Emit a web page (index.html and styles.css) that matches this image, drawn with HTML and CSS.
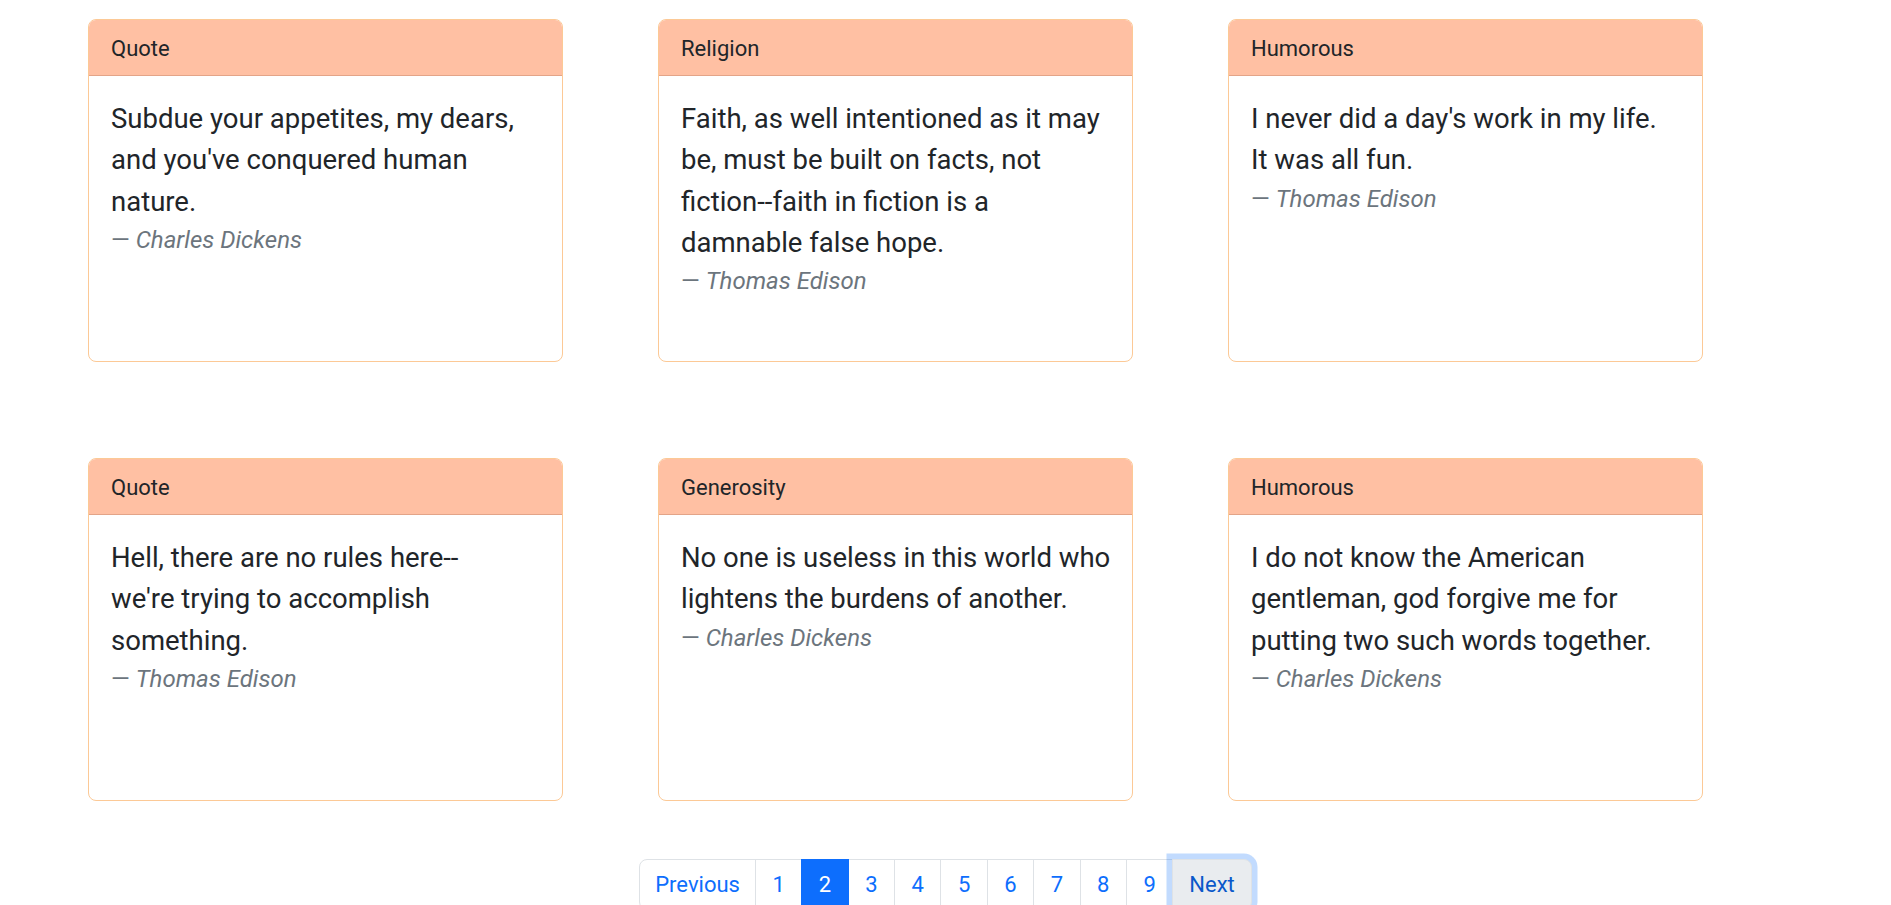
FILE: index.html
```html
<!DOCTYPE html>
<html lang="en">
<head>
<meta charset="utf-8">
<title>Quotes</title>
<link rel="stylesheet" href="styles.css">
</head>
<body>
<main class="page">
  <section class="grid">
    <article class="card">
      <div class="card-header">Quote</div>
      <div class="card-body">
        <blockquote class="blockquote">
          <p><span class="ln">Subdue your appetites, my dears,</span> <span class="ln">and you've conquered human</span> <span class="ln">nature.</span></p>
          <footer class="blockquote-footer"><cite>Charles Dickens</cite></footer>
        </blockquote>
      </div>
    </article>
    <article class="card">
      <div class="card-header">Religion</div>
      <div class="card-body">
        <blockquote class="blockquote">
          <p><span class="ln">Faith, as well intentioned as it may</span> <span class="ln">be, must be built on facts, not</span> <span class="ln">fiction--faith in fiction is a</span> <span class="ln">damnable false hope.</span></p>
          <footer class="blockquote-footer"><cite>Thomas Edison</cite></footer>
        </blockquote>
      </div>
    </article>
    <article class="card">
      <div class="card-header">Humorous</div>
      <div class="card-body">
        <blockquote class="blockquote">
          <p><span class="ln">I never did a day's work in my life.</span> <span class="ln">It was all fun.</span></p>
          <footer class="blockquote-footer"><cite>Thomas Edison</cite></footer>
        </blockquote>
      </div>
    </article>
    <article class="card">
      <div class="card-header">Quote</div>
      <div class="card-body">
        <blockquote class="blockquote">
          <p><span class="ln">Hell, there are no rules here--</span><span class="ln">we're trying to accomplish</span> <span class="ln">something.</span></p>
          <footer class="blockquote-footer"><cite>Thomas Edison</cite></footer>
        </blockquote>
      </div>
    </article>
    <article class="card">
      <div class="card-header">Generosity</div>
      <div class="card-body">
        <blockquote class="blockquote">
          <p><span class="ln">No one is useless in this world who</span> <span class="ln">lightens the burdens of another.</span></p>
          <footer class="blockquote-footer"><cite>Charles Dickens</cite></footer>
        </blockquote>
      </div>
    </article>
    <article class="card">
      <div class="card-header">Humorous</div>
      <div class="card-body">
        <blockquote class="blockquote">
          <p><span class="ln">I do not know the American</span> <span class="ln">gentleman, god forgive me for</span> <span class="ln">putting two such words together.</span></p>
          <footer class="blockquote-footer"><cite>Charles Dickens</cite></footer>
        </blockquote>
      </div>
    </article>
  </section>
  <nav class="pager" aria-label="Pages">
    <ul class="pagination">
      <li class="page-item"><a class="page-link first" href="#">Previous</a></li>
      <li class="page-item"><a class="page-link" href="#">1</a></li>
      <li class="page-item"><a class="page-link active" href="#">2</a></li>
      <li class="page-item"><a class="page-link" href="#">3</a></li>
      <li class="page-item"><a class="page-link" href="#">4</a></li>
      <li class="page-item"><a class="page-link" href="#">5</a></li>
      <li class="page-item"><a class="page-link" href="#">6</a></li>
      <li class="page-item"><a class="page-link" href="#">7</a></li>
      <li class="page-item"><a class="page-link" href="#">8</a></li>
      <li class="page-item"><a class="page-link" href="#">9</a></li>
      <li class="page-item"><a class="page-link last focus" href="#">Next</a></li>
    </ul>
  </nav>
</main>
</body>
</html>
```
FILE: styles.css
```css
* { box-sizing: border-box; }

html, body {
  margin: 0;
  padding: 0;
  background: #fff;
}

body {
  font-family: Roboto, "Noto Sans", sans-serif;
  font-size: 22px;
  line-height: 1.5;
  color: #212529;
}

.page {
  padding-top: 19px;
}

.grid {
  display: grid;
  grid-template-columns: repeat(3, 475px);
  column-gap: 95px;
  row-gap: 96px;
  padding-left: 88px;
}

.card {
  height: 343px;
  border: 1px solid #fcc996;
  border-radius: 8px;
  overflow: hidden;
  background: #fff;
  display: flex;
  flex-direction: column;
}

.card-header {
  background: #ffc0a3;
  border-bottom: 1px solid #e3a488;
  padding: 12px 22px 10px;
  height: 56px;
  font-size: 22px;
  line-height: 33px;
}

.card-body {
  padding: 22px;
}

.blockquote {
  margin: 0;
  font-size: 27.5px;
  line-height: 41.25px;
}

.blockquote p {
  margin: 0;
}

.ln {
  display: block;
  white-space: nowrap;
}

.blockquote-footer {
  font-size: 24px;
  line-height: 36px;
  color: #6c757d;
}

.blockquote-footer::before {
  content: "\2014\00A0";
}

.blockquote-footer cite {
  font-style: italic;
}

.pager {
  margin-top: 58px;
  display: flex;
  justify-content: center;
}

.pagination {
  display: flex;
  list-style: none;
  margin: 0;
  padding: 0;
}

.page-item + .page-item .page-link {
  margin-left: -1px;
}

.page-link {
  display: block;
  padding: 8px 16.5px;
  font-size: 22px;
  line-height: 33px;
  color: #0d6efd;
  text-decoration: none;
  background: #fff;
  border: 1px solid #dee2e6;
}

.page-link.first {
  border-radius: 8px 0 0 8px;
  padding: 8px 15px;
}

.page-link.last {
  border-radius: 0 8px 8px 0;
  padding: 8px 16px;
}

.page-link.active {
  position: relative;
  z-index: 2;
  background: #0d6efd;
  border-color: #0d6efd;
  color: #fff;
}

.page-link.focus {
  position: relative;
  z-index: 3;
  background: #e9ecef;
  color: #0a58ca;
  box-shadow: 0 0 0 5.5px rgba(13, 110, 253, 0.25);
}
```
